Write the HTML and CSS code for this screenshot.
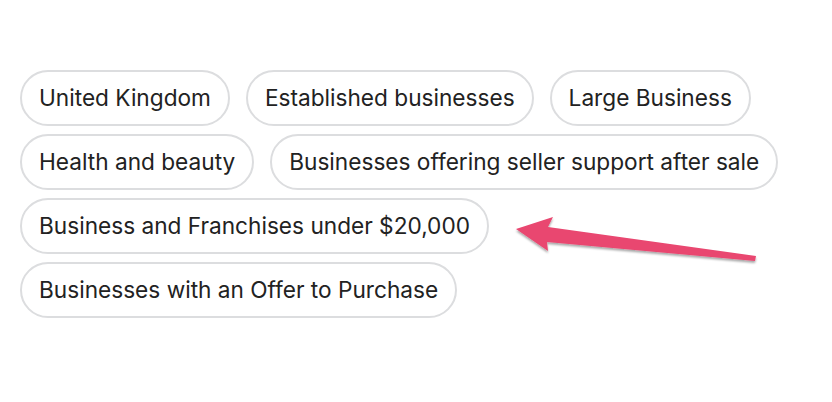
FILE: index.html
```html
<!DOCTYPE html>
<html>
<head>
<meta charset="utf-8">
<link rel="stylesheet" href="styles.css">
</head>
<body>
<div class="page">
  <div class="chips">
    <span class="chip">United Kingdom</span>
    <span class="chip">Established businesses</span>
    <span class="chip">Large Business</span>
    <span class="chip">Health and beauty</span>
    <span class="chip">Businesses offering seller support after sale</span>
    <span class="chip">Business and Franchises under $20,000</span>
    <span class="chip">Businesses with an Offer to Purchase</span>
  </div>
  <svg class="arrow" width="832" height="402" viewBox="0 0 832 402">
    <defs>
      <filter id="sh" x="-10%" y="-50%" width="120%" height="200%">
        <feDropShadow dx="0" dy="2" stdDeviation="1.2" flood-color="#000" flood-opacity="0.35"/>
      </filter>
    </defs>
    <polygon filter="url(#sh)" fill="#e94670" points="516,229 553,217 548,227 756,256 755,261 547,242 548,251"/>
  </svg>
</div>
</body>
</html>
```
FILE: styles.css
```css
html, body {
  margin: 0;
  padding: 0;
  background: #ffffff;
}
.page {
  position: relative;
  width: 832px;
  height: 402px;
  overflow: hidden;
}
.chips {
  display: flex;
  flex-wrap: wrap;
  column-gap: 16px;
  row-gap: 8px;
  width: 790px;
  padding: 70px 0 0 20px;
}
.chip {
  box-sizing: border-box;
  height: 56px;
  display: flex;
  align-items: center;
  padding: 0 17px 2px;
  border: 2px solid #dcdddf;
  border-radius: 28px;
  font-family: Inter, "Noto Sans", sans-serif;
  font-size: 22.65px;
  color: #222222;
  white-space: nowrap;
}
.arrow {
  position: absolute;
  left: 0;
  top: 0;
}
```
